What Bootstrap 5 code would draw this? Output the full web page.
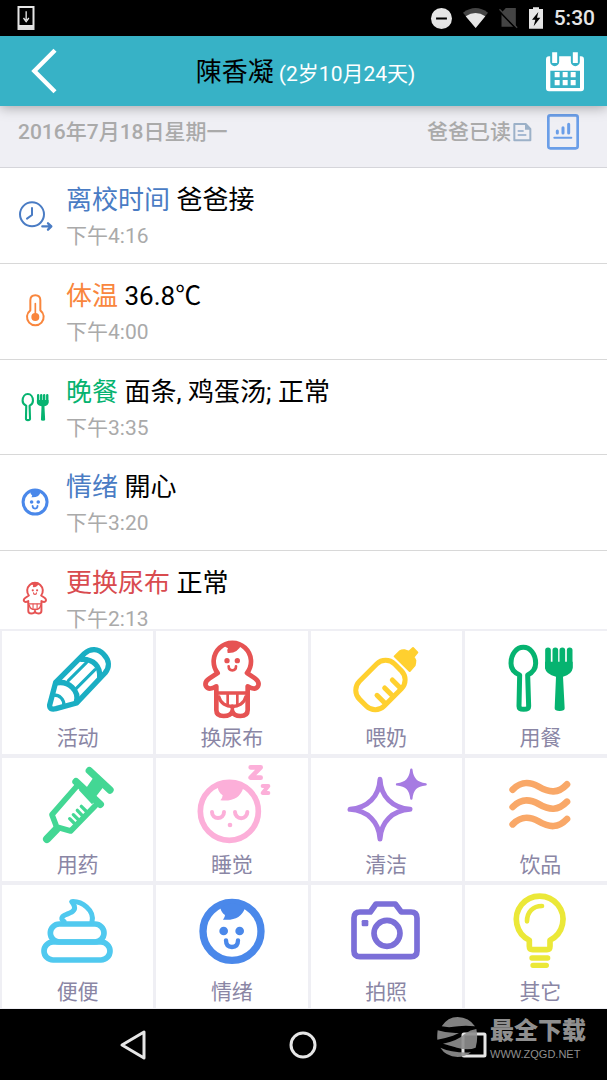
<!DOCTYPE html>
<html lang="zh-CN">
<head>
<meta charset="utf-8">
<meta name="viewport" content="width=device-width, initial-scale=1">
<title>陳香凝</title>
<link href="https://cdn.jsdelivr.net/npm/bootstrap@5.3.0/dist/css/bootstrap.min.css" rel="stylesheet">
<style>
  body { font-family: Roboto, "Noto Sans CJK SC", sans-serif; font-size: 21px; line-height: 38px; color: #000; background: #efeff4; }
  svg { display: block; overflow: visible; }
  button { font: inherit; }
  .ln { fill: none; stroke: currentColor; stroke-linecap: round; stroke-linejoin: round; }
  .status-bar { height: 36px; padding: 0 12px 0 17px; gap: 11px; background: #000; color: #e6e6e6; font-size: 21px; line-height: 36px; }
  .app-head { height: 70px; padding: 0 22px 0 30px; background: #37b2c6; color: #fff; box-shadow: 0 1px 12px rgba(0,0,0,.35); z-index: 2; }
  .app-head h1 { font-size: 21px; line-height: 38px; font-weight: 400; padding: 4px 4px 0 0; }
  .child-name { font-size: 26px; color: #000; }
  .day-bar { height: 62px; padding: 0 26px 10px 18px; background: #efeff4; border-bottom: 1px solid #d5d5da; color: #aaa; }
  .day-text { font-weight: 500; }
  .log-row { height: 96px; padding: 13px 16px 0 17px; gap: 13px; border-bottom: 1px solid #d8d8d8; }
  .log-row:nth-child(3n) { height: 95px; }
  .log-icon { width: 36px; height: 36px; margin-top: 16px; }
  .log-title { font-size: 26px; line-height: 38px; }
  .log-time { color: #aaa; line-height: 22px; margin-top: 6px; }
  .tile-grid { display: grid; grid-template-columns: repeat(4, 25%); grid-auto-rows: 123px; gap: 4px 3px; padding: 2px 0 1px 2px; background: #efeff4; }
  .tile-btn { background: #fff; border: 0; padding: 6px 0 0; }
  .tile-btn svg { width: 80px; height: 80px; }
  .tile-btn span { color: #8a86a5; line-height: 30px; margin-top: 6px; }
  .nav-keys { height: 71px; background: #000; }
  .brand-mark { right: 21px; top: 8px; gap: 12px; color: #8f8f8f; }
  .brand-name { font-size: 24px; line-height: 28px; font-weight: 900; }
  .brand-url { font-family: "Liberation Sans", sans-serif; font-size: 11px; line-height: 11px; }
  .c-blue { color: #4a7cc4 } .c-orange { color: #f9863d } .c-green { color: #06b370 } .c-face { color: #4a88ea } .c-red { color: #e65353 } .c-redtext { color: #d94b4f }
</style>
</head>
<body class="vh-100 d-flex flex-column overflow-hidden">

<svg width="0" height="0" class="position-absolute" aria-hidden="true">
  <symbol id="baby" overflow="visible">
    <g class="ln" stroke-width="14">
      <path d="M652 144A56 56 0 1 1 740 144L764 160Q779 171 773 184Q765 197 742 184V255Q742 273 720 273Q701 273 696 260Q691 273 670 273Q648 273 648 255V184Q625 197 617 184Q611 171 628 160Z"/>
      <path stroke-width="10" d="M648 204H742M656 216C664 254 728 254 736 216"/>
      <path stroke-width="8" d="M682 205V240M711 205V240"/>
      <path stroke-width="11" d="M696 243V266"/>
      <path stroke-width="8" d="M685 124Q685 136 696 136Q707 136 707 124"/>
    </g>
    <path fill="currentColor" d="M668 58Q674 66 683 70Q678 76 682 84Q712 86 724 58Q698 38 668 58Z"/>
    <g fill="currentColor"><circle cx="680" cy="107" r="8"/><circle cx="711" cy="107" r="8"/></g>
  </symbol>
  <symbol id="cutlery" overflow="visible">
    <path class="ln" stroke-width="15" d="M645 150C628 143 619 132 619 115C619 86 636 67 656 67C676 67 693 86 693 115C693 132 684 143 669 150L672 244Q672 253 657 253Q643 253 643 244Z"/>
    <path class="ln" stroke-width="17" d="M730 76V125M752 76V125M773 76V125M795 76V125"/>
    <path fill="currentColor" d="M721 110V130Q724 148 754 155L750 250Q750 258 765 258Q780 258 780 250L775 155Q802 148 804 130V110Z"/>
  </symbol>
  <symbol id="face" overflow="visible">
    <circle class="ln" stroke-width="22" cx="695" cy="154" r="87"/>
    <path fill="currentColor" d="M660 84Q663 98 674 105Q674 112 668 119Q720 124 734 84Q696 58 660 84Z"/>
    <circle fill="currentColor" cx="670" cy="153" r="13"/><circle fill="currentColor" cx="718" cy="153" r="13"/>
    <path class="ln" stroke-width="13" d="M677 181Q677 201 695 201Q713 201 713 181"/>
  </symbol>
</svg>

<div class="status-bar d-flex align-items-center flex-shrink-0">
  <svg class="me-auto" width="18" height="24" viewBox="54 18 51 72"><path fill="#e6e6e6" fill-rule="evenodd" d="M54 18H105V90H54ZM60 24V75H99V24Z"/><path d="M80 34V60M72 54L80 65L88 54" fill="none" stroke="#e6e6e6" stroke-width="4"/></svg>
  <svg width="21" height="21" viewBox="387 23 62 62"><circle cx="418" cy="54" r="31" fill="#e6e6e6"/><path d="M402 54H434" stroke="#000" stroke-width="6"/></svg>
  <svg width="25" height="20" viewBox="480 22 75 60"><path fill="#444" d="M480 36Q518 8 555 36L518 82Z"/><path fill="#e6e6e6" d="M488 47Q518 27 547 47L518 82Z"/></svg>
  <svg width="19" height="20" viewBox="585 24 56 60"><path fill="#444" d="M605 24H635V80H592V38Z"/><path d="M583 31L636 86" stroke="#000" stroke-width="5"/><path d="M586 28L639 83" stroke="#444" stroke-width="4"/></svg>
  <svg width="14" height="22" viewBox="681 20 42 64"><path fill="#e6e6e6" d="M693 20H711V25H723V84H681V25H693Z"/><path fill="#000" d="M709 34L690 57H700L695 77L715 51H705Z"/></svg>
  <span class="fw-medium">5:30</span>
</div>

<header class="app-head d-flex align-items-center flex-shrink-0 position-relative">
  <button class="btn p-0 border-0 text-white" type="button" aria-label="返回"><svg width="40" height="46" viewBox="90 144 120 138"><path d="M165 151L103 213L165 275" fill="none" stroke="#fff" stroke-width="13"/></svg></button>
  <h1 class="flex-grow-1 text-center m-0"><span class="child-name">陳香凝</span> (2岁10月24天)</h1>
  <button class="btn p-0 border-0" type="button" aria-label="日历"><svg width="40" height="42" viewBox="726 149 120 126"><path fill="#fff" fill-rule="evenodd" d="M738 168H834Q843 168 843 178V264Q843 273 834 273H738Q729 273 729 264V178Q729 168 738 168ZM742 211V263H831V211Z"/><path d="M755 162V184M817 162V184" stroke="#37b2c6" stroke-width="27" stroke-linecap="round"/><path d="M755 156V188M817 156V188" stroke="#fff" stroke-width="15"/><path d="M755 223H818M755 247H818" stroke="#fff" stroke-width="16" stroke-dasharray="15 9"/></svg></button>
</header>

<div class="day-bar d-flex align-items-center flex-shrink-0">
  <span class="day-text me-auto">2016年7月18日星期一</span>
  <span class="day-text">爸爸已读</span>
  <svg class="me-2" width="22" height="20" viewBox="624 365 66 60" aria-hidden="true"><path d="M634 371H668L682 386V420H634Z" fill="none" stroke="#9cb1c8" stroke-width="6" stroke-linejoin="round"/><path d="M666 370V388H684Z" fill="#9cb1c8"/><path d="M644 392H662M644 404H670" stroke="#8fa8c6" stroke-width="5"/></svg>
  <button class="btn p-0 border-0 ms-1" type="button" aria-label="图表"><svg width="36" height="36" viewBox="725 340 108 108"><g class="ln" color="#6a9ee8"><rect x="735" y="344" width="88" height="99" rx="6" stroke-width="8"/><path stroke-width="9" d="M762 391V397M779 381V397M796 371V397"/><path stroke-width="6" d="M753 411H804"/></g></svg></button>
</div>

<main class="flex-grow-1 overflow-hidden bg-white">
  <ul class="list-unstyled m-0">
    <li class="log-row d-flex">
      <svg class="log-icon c-blue flex-shrink-0" viewBox="51 96 108 108"><circle class="ln" stroke-width="6" cx="96" cy="148" r="36"/><path class="ln" stroke-width="6" d="M96 129V150L81 161"/><path class="ln" stroke-width="7" d="M127 184H152M144 175L154 184L144 194"/></svg>
      <div><div class="log-title"><span class="c-blue">离校时间</span> 爸爸接</div><div class="log-time">下午4:16</div></div>
    </li>
    <li class="log-row d-flex">
      <svg class="log-icon c-orange flex-shrink-0" viewBox="51 384 108 108"><path class="ln" stroke-width="6" d="M91 436V406Q91 391 106 391Q121 391 121 406V436A25 25 0 1 1 91 436Z"/><path class="ln" stroke-width="5" d="M106 416V456"/><circle cx="106" cy="456" r="12" fill="currentColor"/></svg>
      <div><div class="log-title"><span class="c-orange">体温</span> 36.8℃</div><div class="log-time">下午4:00</div></div>
    </li>
    <li class="log-row d-flex">
      <svg class="log-icon c-green flex-shrink-0" viewBox="579 31 257 257"><use href="#cutlery"/></svg>
      <div><div class="log-title"><span class="c-green">晚餐</span> 面条, 鸡蛋汤; 正常</div><div class="log-time">下午3:35</div></div>
    </li>
    <li class="log-row d-flex">
      <svg class="log-icon c-face flex-shrink-0" viewBox="564 23 261 261"><use href="#face"/></svg>
      <div><div class="log-title"><span class="c-blue">情绪</span> 開心</div><div class="log-time">下午3:20</div></div>
    </li>
    <li class="log-row d-flex">
      <svg class="log-icon c-red flex-shrink-0" viewBox="567 33 258 258"><use href="#baby"/></svg>
      <div><div class="log-title"><span class="c-redtext">更换尿布</span> 正常</div><div class="log-time">下午2:13</div></div>
    </li>
  </ul>
</main>

<div class="tile-grid flex-shrink-0 overflow-hidden">
  <button type="button" class="tile-btn d-flex flex-column align-items-center">
    <svg viewBox="111 36 240 240" color="#1aaec3"><g class="ln" stroke-width="16"><path d="M146 240L164 172L250 86C268 69 292 70 308 88C326 106 326 127 312 144L227 234L165 251Q145 256 146 240Z"/><path d="M166 174C203 166 236 198 226 232M243 103C278 102 298 124 296 156"/><path stroke-width="9" d="M202 167L257 112M226 190L282 134"/><path stroke-width="10" d="M157 210C176 210 189 222 189 242"/></g></svg>
    <span>活动</span></button>
  <button type="button" class="tile-btn d-flex flex-column align-items-center">
    <svg class="c-red" viewBox="575 36 240 240"><use href="#baby"/></svg>
    <span>换尿布</span></button>
  <button type="button" class="tile-btn d-flex flex-column align-items-center">
    <svg viewBox="123 36 240 240" color="#ffd02f"><g class="ln" stroke-width="15"><rect x="152" y="127" width="149" height="105" rx="38" transform="rotate(-45 227 180)"/><path d="M262 165L286 189M239 189L264 214M216 211L240 235"/></g><path fill="currentColor" stroke="currentColor" stroke-width="6" stroke-linejoin="round" d="M269 94L284 79Q292 74 300 76L312 80L324 69L337 82L326 96L331 106Q331 113 329 121L314 138Z"/></svg>
    <span>喂奶</span></button>
  <button type="button" class="tile-btn d-flex flex-column align-items-center">
    <svg class="c-green" viewBox="586 36 240 240"><use href="#cutlery"/></svg>
    <span>用餐</span></button>

  <button type="button" class="tile-btn d-flex flex-column align-items-center">
    <svg viewBox="114 27 240 240" color="#43d794"><g class="ln" stroke-width="17"><path stroke-width="22" d="M268 47L330 105M228 80L301 148"/><path d="M231 93L156 179L170 216L212 228L290 148"/><path stroke-width="24" d="M170 222L141 252"/><path stroke-width="10" d="M244 154L258 168M232 166L247 182M220 179L236 195M209 191L225 207"/></g><path fill="currentColor" d="M283 64L313 92L284 130L258 100ZM246 94L288 134L276 148L237 106Z"/></svg>
    <span>用药</span></button>
  <button type="button" class="tile-btn d-flex flex-column align-items-center">
    <svg viewBox="575 27 240 240" color="#fcafd9"><g class="ln"><circle stroke-width="17" cx="687" cy="169" r="87"/><path stroke-width="12" d="M635 171A18 18 0 0 0 671 171M704 171A18 18 0 0 0 741 171"/><polyline stroke-width="14" points="751,37 781,37 751,68 781,68"/><polyline stroke-width="12" points="787,93 804,93 787,114 804,114"/></g><path fill="currentColor" d="M652 96Q654 112 667 121Q667 129 660 136Q716 142 729 98Q690 70 652 96Z"/><circle fill="currentColor" cx="689" cy="210" r="7"/></svg>
    <span>睡觉</span></button>
  <button type="button" class="tile-btn d-flex flex-column align-items-center">
    <svg viewBox="123 27 240 240" color="#a67be2"><path class="ln" stroke-width="15" d="M225 73C228 125 262 159 315 163C262 167 228 200 225 252C222 200 188 167 135 163C188 159 222 125 225 73Z"/><path fill="currentColor" stroke="currentColor" stroke-width="7" stroke-linejoin="round" d="M319 44C322 72 334 84 362 88C334 91 322 102 319 131C316 102 304 91 276 88C304 84 316 72 319 44Z"/></svg>
    <span>清洁</span></button>
  <button type="button" class="tile-btn d-flex flex-column align-items-center">
    <svg viewBox="586 27 240 240" color="#f9a868"><g class="ln" stroke-width="20"><path id="wave" d="M624 104C650 78 675 80 702 95C735 114 760 116 787 88"/><use href="#wave" y="52"/><use href="#wave" y="104"/></g></svg>
    <span>饮品</span></button>

  <button type="button" class="tile-btn d-flex flex-column align-items-center">
    <svg viewBox="114 33 240 240" color="#50c9ef"><g class="ln" stroke-width="17"><rect x="132" y="186" width="198" height="54" rx="27"/><rect x="151" y="132" width="161" height="54" rx="27"/><path stroke-width="15" d="M192 124C182 118 184 110 195 105C216 97 227 92 223 79Q221 71 215 65C246 63 284 90 276 125"/></g></svg>
    <span>便便</span></button>
  <button type="button" class="tile-btn d-flex flex-column align-items-center">
    <svg class="c-face" viewBox="575 33 240 240"><use href="#face"/></svg>
    <span>情绪</span></button>
  <button type="button" class="tile-btn d-flex flex-column align-items-center">
    <svg viewBox="123 33 240 240" color="#7b6fd8"><g class="ln" stroke-width="17"><path d="M165 96H196L213 72H271L289 96H318Q336 96 336 114V213Q336 230 318 230H165Q147 230 147 213V114Q147 96 165 96Z"/><circle cx="246" cy="160" r="39"/></g><rect fill="currentColor" x="170" y="120" width="20" height="19" rx="4"/></svg>
    <span>拍照</span></button>
  <button type="button" class="tile-btn d-flex flex-column align-items-center">
    <svg viewBox="586 33 240 240" color="#ebe838"><g class="ln" stroke-width="17"><path d="M674 181A70 70 0 1 1 736 181V199Q736 209 727 209H684Q674 209 674 199Z"/><path stroke-width="14" d="M667 124C667 95 685 78 712 78"/><path stroke-width="16" d="M682 234H729M685 256H725"/></g></svg>
    <span>其它</span></button>
</div>

<nav class="nav-keys d-flex align-items-center px-5 position-relative flex-shrink-0">
  <button class="btn p-0 border-0 flex-fill d-flex justify-content-center" type="button" aria-label="后退"><svg width="28" height="28" viewBox="0 0 28 28"><path d="M25 1V27L3 14Z" fill="none" stroke="#e6e6e6" stroke-width="3" stroke-linejoin="round"/></svg></button>
  <button class="btn p-0 border-0 flex-fill d-flex justify-content-center" type="button" aria-label="主页"><svg width="28" height="28" viewBox="0 0 28 28"><circle cx="14" cy="14" r="12" fill="none" stroke="#e6e6e6" stroke-width="3"/></svg></button>
  <button class="btn p-0 border-0 flex-fill d-flex justify-content-center" type="button" aria-label="最近任务"><svg width="28" height="28" viewBox="0 0 28 28"><rect x="3" y="3" width="22" height="22" rx="1" fill="none" stroke="#e6e6e6" stroke-width="3"/></svg></button>
  <div class="brand-mark position-absolute d-flex align-items-start pe-none">
    <svg width="41" height="40" viewBox="116 36 123 120" opacity=".9"><path fill="currentColor" d="M130 64Q148 36 178 36Q212 37 230 64Q200 60 180 64Q150 69 130 64ZM118 76Q150 86 182 84L164 92Q140 100 117 104Q116 90 118 76ZM234 72Q240 100 232 128Q210 138 176 128Q150 120 134 116Q180 106 200 86Q216 74 234 72ZM126 128Q160 144 218 142Q200 156 178 156Q142 154 126 128Z"/></svg>
    <div><div class="brand-name">最全下载</div><div class="brand-url mt-1">WWW.ZQGD.NET</div></div>
  </div>
</nav>

<script src="https://cdn.jsdelivr.net/npm/bootstrap@5.3.0/dist/js/bootstrap.bundle.min.js"></script>
</body>
</html>
